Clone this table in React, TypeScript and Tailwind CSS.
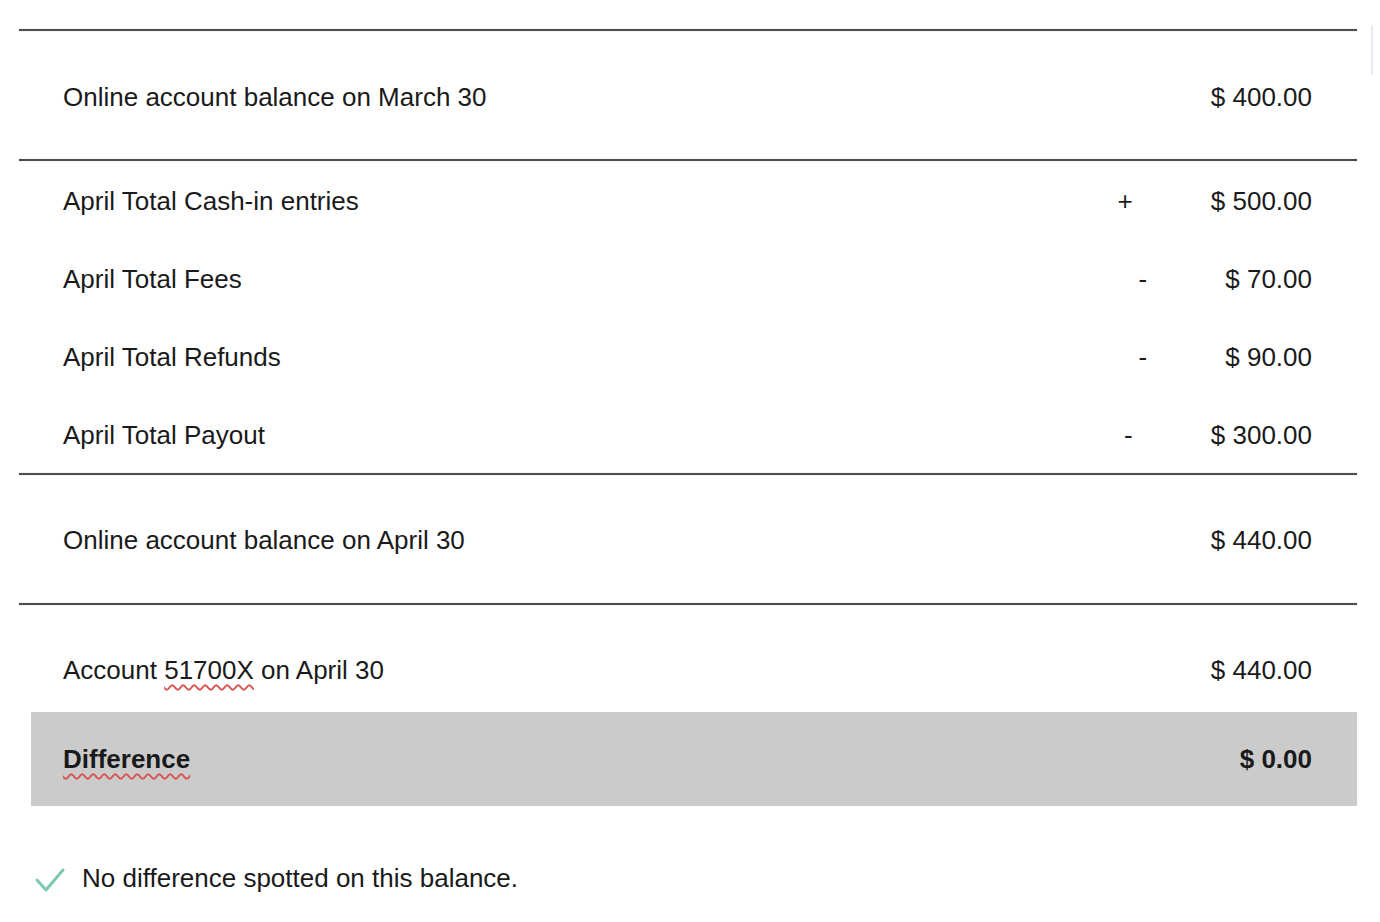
const rows = [
  { label: 'April Total Cash-in entries', sign: '+', amount: '$ 500.00' },
  { label: 'April Total Fees', sign: '-', amount: '$ 70.00' },
  { label: 'April Total Refunds', sign: '-', amount: '$ 90.00' },
  { label: 'April Total Payout', sign: '-', amount: '$ 300.00' },
];

function Rule() {
  return <div className="h-[2px] bg-[#4e4e4e] shadow-[0_0_1px_#8a8a8a]" />;
}

function Row({ label, sign, amount, h = 'h-[78px] pt-[2px]' }: { label: React.ReactNode; sign?: string; amount: string; h?: string }) {
  return (
    <div className={`flex items-center justify-between pl-[44px] pr-[45px] ${h}`}>
      <span>{label}</span>
      <div className="flex items-center gap-[78px]">
        {sign && <span>{sign}</span>}
        <span>{amount}</span>
      </div>
    </div>
  );
}

export default function App() {
  return (
    <div
      className="relative w-[1380px] h-[922px] bg-white text-[26px] leading-none text-[#1a1a1a] overflow-hidden"
      style={{ fontFamily: '"Liberation Sans", Arial, sans-serif' }}
    >
      <div className="absolute right-[7px] top-[25px] h-[50px] w-[2px] bg-[#e9ecf3]" />
      <div className="ml-[19px] w-[1338px] pt-[29px]">
        <Rule />
        <Row label="Online account balance on March 30" amount="$ 400.00" h="h-[128px] pt-[3px]" />
        <Rule />
        {rows.map((r) => (
          <Row key={r.label} label={r.label} sign={r.sign} amount={r.amount} />
        ))}
        <Rule />
        <Row label="Online account balance on April 30" amount="$ 440.00" h="h-[128px] pt-[2px]" />
        <Rule />
        <div className="pt-[26px]">
          <Row
            label={
              <>
                Account{' '}
                <span className="underline decoration-wavy decoration-[#d9534f] decoration-[1.5px] underline-offset-[5px]">
                  51700X
                </span>{' '}
                on April 30
              </>
            }
            amount="$ 440.00"
            h="h-[78px]"
          />
        </div>
        <div className="mt-[3px] ml-[12px] h-[94px] bg-[#cbcbcb] flex items-center justify-between pl-[32px] pr-[45px] font-bold">
          <span className="underline decoration-wavy decoration-[#d9534f] decoration-[1.5px] underline-offset-[5px]">
            Difference
          </span>
          <span>$ 0.00</span>
        </div>
        <div className="mt-[52px] h-[40px] flex items-center">
          <svg width="32" height="28" viewBox="0 0 32 28" className="ml-[15px] mt-[4px]">
            <polyline
              points="3,14 12,24 29,4"
              fill="none"
              stroke="#7cc9b0"
              strokeWidth="3"
              strokeLinecap="round"
              strokeLinejoin="round"
            />
          </svg>
          <span className="ml-[16px]">No difference spotted on this balance.</span>
        </div>
      </div>
    </div>
  );
}
